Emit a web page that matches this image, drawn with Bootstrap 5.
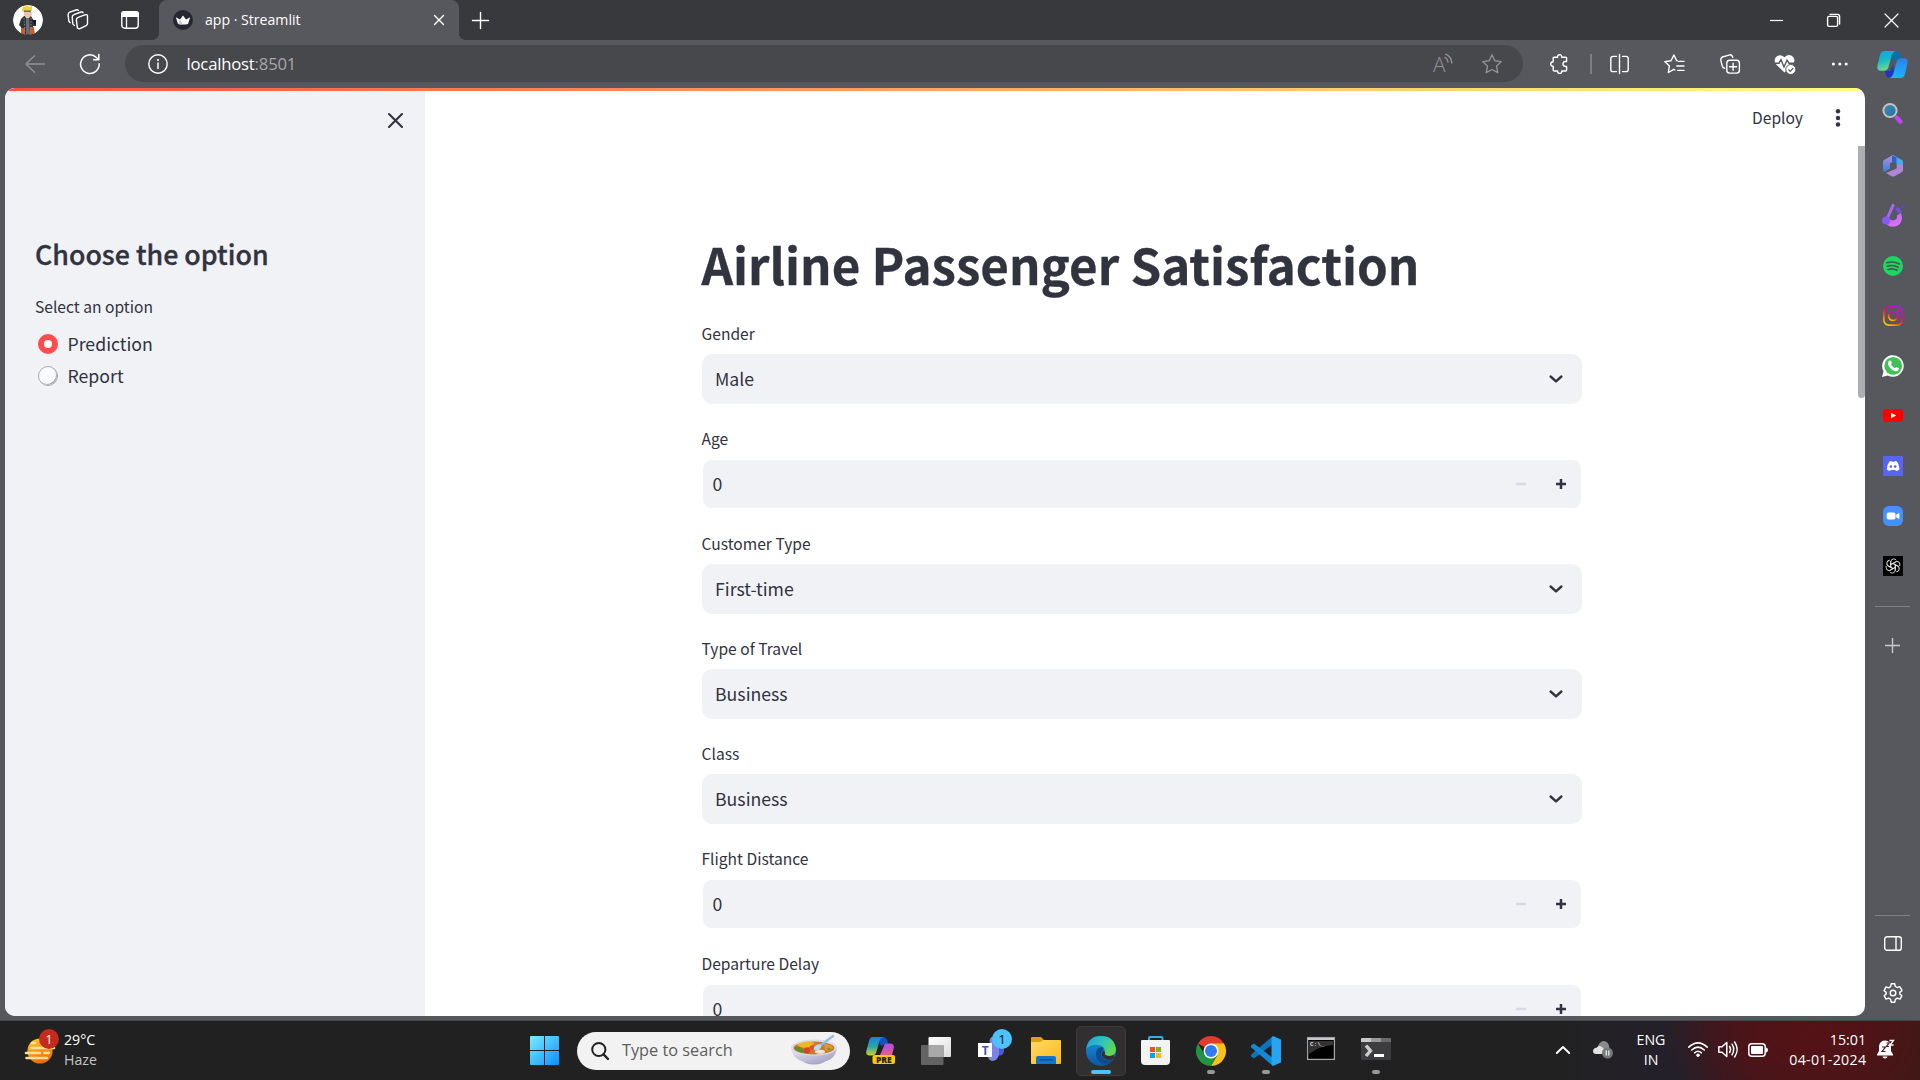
<!DOCTYPE html>
<html lang="en">
<head>
<meta charset="utf-8">
<title>app · Streamlit</title>
<link href="https://cdn.jsdelivr.net/npm/bootstrap@5.3.0/dist/css/bootstrap.min.css" rel="stylesheet">
<style>
  :root { --ui: "Open Sans", "Noto Sans", sans-serif; --st: "Noto Sans CJK SC", "Noto Sans", sans-serif; --ink: #31333f; --field: #f0f2f6; }
  body { width: 1920px; height: 1080px; overflow: hidden; background: #57585d; font-family: var(--ui); color: #fff; }
  svg { display: block; overflow: visible; flex: none; }
  .ln { fill: none; stroke: currentColor; stroke-width: 1.4; stroke-linecap: round; stroke-linejoin: round; }
  .cell { display: flex; align-items: center; justify-content: center; flex: none; }
  .w55 { width: 55px; }
  .w30 { width: 30px; }

  .tabstrip { height: 40px; background: #38393d; }
  .w-avatar { width: 52px; padding-left: 4px; }
  .w-work { width: 52px; }
  .w-acts { width: 55px; padding-right: 4px; }
  .w-newtab { width: 43px; }
  .browser-tab { width: 300px; height: 40px; background: #57585d; border-radius: 8px 8px 0 0; padding: 0 11px 0 14px; position: relative; }
  .browser-tab::before, .browser-tab::after { content: ""; position: absolute; bottom: 0; width: 6px; height: 6px; }
  .browser-tab::before { left: -6px; background: radial-gradient(circle at 0 0, transparent 5.5px, #57585d 6px); }
  .browser-tab::after { right: -6px; background: radial-gradient(circle at 100% 0, transparent 5.5px, #57585d 6px); }
  .tab-title { font-size: 14.1px; margin-left: 12px; line-height: 20px; }
  .win-btn { width: 57.5px; height: 40px; }

  .toolbar { height: 48px; }
  .w-back { width: 70px; }
  .w-reload { width: 40px; margin-right: 15px; }
  .w-ext { width: 67px; padding-left: 6px; }
  .w-copilot { width: 51px; }
  .omnibox { width: 1398px; height: 37px; margin-top: -1px; border-radius: 19px; background: #47484b; padding: 0 21px 0 23px; }
  .omnibox .url { font-size: 16.7px; margin-left: 18.5px; letter-spacing: -.2px; line-height: 24px; }
  .omnibox .port { color: #a6a6a8; }
  .omnibox .fav { margin-left: 29px; }
  .dim { color: #909194; }
  .vline { width: 2px; height: 20px; background: #7d7e82; }

  .viewport-row { height: 932px; }
  .page { width: 1860px; height: 928px; margin-left: 5px; border-radius: 10px; background: #fff; color: var(--ink); font-family: var(--st); overflow: hidden; position: relative; }
  .page-strip { position: absolute; inset: 0 0 auto 0; height: 3px; background: linear-gradient(90deg, #ff4b4b, #fffd80); }
  .st-side { width: 420px; background: var(--field); padding: 25px 22px 0 30px; }
  .st-head { font-size: 26.8px; font-weight: 500; line-height: 36px; margin: 108px 0 20px; white-space: nowrap; -webkit-text-stroke: .35px var(--ink); }
  .st-label { font-size: 15.6px; line-height: 28px; height: 28px; }
  .st-text { font-size: 17.7px; }
  .st-radio { height: 32px; padding-left: 3px; }
  .st-radio span + span { margin-top: -2px; }
  .dot { width: 20px; height: 20px; border-radius: 50%; margin-right: 9.5px; }
  .dot-on { background: #fff; border: 6.5px solid #ff4b4b; }
  .dot-off { background: #f9fafc; border: 1px solid #a9abb2; box-shadow: inset -1px -1px 0 #a9abb2; }
  .st-main { flex: 1; position: relative; }
  .st-top { height: 58px; padding: 2px 15px 0 0; }
  .st-top .st-label { margin-top: -3px; }
  .st-top svg { margin-left: 23px; }
  .st-scroll { width: 880px; margin-left: 277px; }
  .st-title { font-size: 49.3px; font-weight: 700; line-height: 66px; margin: 85px 0 22px -.5px; white-space: nowrap; -webkit-text-stroke: .3px var(--ink); }
  .field-block { height: 105px; }
  .field-block .st-label { margin-left: -.5px; }
  .st-select, .st-number { height: 50px; margin-top: 7px; background: var(--field); border-radius: 10px; }
  .st-select > span, .st-number > span:first-child { margin-top: -2px; }
  .st-select { padding: 0 16px 0 13px; }
  .st-number { border: 1px solid #fff; padding: 0 0 0 9.5px; }
  .step { width: 40px; }
  .page-scroll { position: absolute; right: 0; top: 58px; width: 7px; height: 252px; background: #adaeb3; border-radius: 0 0 4px 4px; }

  .edge-rail { width: 55px; padding: 2.5px 0 0 0; }
  .edge-rail .cell { height: 50px; }
  .rail-line { width: 35px; height: 1px; background: #808185; margin: 0 auto; }

  .taskbar { height: 60px; border-top: 1px solid #46474a; background: radial-gradient(ellipse 150px 110px at 1815px 10px, #561216 0, #4c1417 45%, transparent 100%), linear-gradient(90deg, #212121 0, #212122 1560px, #24202a 1680px, #301a26 1740px, #48171a 1800px, #451818 1850px, #3a1a16 1920px); }
  .weather { width: 517px; padding-left: 25px; }
  .weather svg { margin-top: -8px; }
  .weather .tb-text { margin-left: 5px; }
  .tb-text { font-size: 14.2px; line-height: 20px; margin-top: -2px; }
  .muted { color: #c4c4c4; }
  .date { letter-spacing: .3px; margin-right: -.3px; }
  .tb-search { width: 273px; height: 38px; border-radius: 19px; background: #f2f2f2; margin: 0 3px 0 5px; padding: 0 13px 0 14px; color: #5d5d5d; font-size: 16.3px; }
  .tb-search span { margin-left: 13px; }
  .tile { position: relative; height: 59px; }
  .tile-active { width: 50px; height: 50px; background: #322f31; border: 1px solid #3f3c3d; border-radius: 5px; }
  .pip { position: absolute; bottom: 6px; left: 50%; margin-left: -4px; width: 8px; height: 4px; border-radius: 2px; background: #989898; }
  .pip-on { width: 20px; margin-left: -10px; background: #4cc2ff; }
</style>
<script src="https://cdn.jsdelivr.net/npm/bootstrap@5.3.0/dist/js/bootstrap.bundle.min.js"></script>
</head>
<body>

<!-- Tab strip -->
<header class="tabstrip d-flex align-items-center">
  <div class="cell w-avatar">
    <svg width="30" height="30" viewBox="0 0 30 30"><clipPath id="av"><circle cx="15" cy="15" r="15"/></clipPath><g clip-path="url(#av)"><circle cx="15" cy="15" r="15" fill="#fff"/><path d="M8 14 11 11H18L21 16 23 15 23 21 20 21 20 30H9L8 22 6 20Z" fill="#32333a"/><path d="M8 23h4v7H8zM17 22l4 0 1 8h-5z" fill="#c65f2e"/><path d="M13 12h3l1 17h-4z" fill="#6b6e77"/><path d="M11 13l1 14M18 13v14" stroke="#8d8f98" stroke-width=".8" stroke-dasharray="1.500 1.500"/><path d="M11 4h7l1 6-3 3h-3l-2-3z" fill="#edc7a0"/><path d="M9 5 10 1 12 2 14 0 16 2 19 1 19 6 16 5 10 7Z" fill="#f3d42a"/><path d="M11 5.500h7v1.500h-7z" fill="#606d83"/><path d="M19 15l4 0-1 5z" fill="#15151a"/></g></svg>
  </div>
  <div class="cell w-work"><svg class="ln" width="22" height="22" viewBox="0 0 22 22"><path d="M11.2 8.4 18.5 5.7Q20.5 5.2 20.5 7V14.6Q20.5 16 19.2 16.6L13 19.6Q10.6 20.2 10.2 18L9.4 10.8Q9.3 9.1 11.2 8.4ZM7.3 16.4Q6 16 5.8 14.5L5.2 8.2Q5.2 6.2 6.9 5.6L14 3Q15.8 2.7 16.1 3.7M3.2 13.6Q2 13 1.8 11.7L1.1 6Q1 4 2.8 3.2L9 1Q10.8.5 11.3 1.4"/></svg></div>
  <div class="cell w-acts"><svg width="18" height="18" viewBox="0 0 18 18"><rect x=".8" y=".8" width="16.4" height="16.4" rx="3" fill="none" stroke="#fff" stroke-width="1.4"/><path d="M0 6V3Q0 0 3 0H15Q18 0 18 3V6Z" fill="#fff"/><path d="M5.5 6V17" stroke="#fff" stroke-width="1.3"/></svg></div>
  <div class="browser-tab d-flex align-items-center">
    <svg width="20" height="20" viewBox="0 0 20 20"><circle cx="10" cy="10" r="10" fill="#262730"/><path d="M2.8 7.2 7 9.4 10 5.6 13 9.4 17.2 7.2 15 14Q10 15.2 5 14Z" fill="#fff"/><path d="M7 9.4 10 14.6 5 14Z" fill="#ccc"/></svg>
    <span class="tab-title">app · Streamlit</span>
    <svg class="ln ms-auto me-1" width="10" height="10" viewBox="0 0 10 10"><path d="M.5.5 9.5 9.5M9.5.5.5 9.5"/></svg>
  </div>
  <div class="cell w-newtab"><svg class="ln" width="17" height="17" viewBox="0 0 17 17"><path d="M8.5.5V16.5M.5 8.5H16.5"/></svg></div>
  <div class="d-flex ms-auto">
    <div class="cell win-btn"><svg width="13" height="13" viewBox="0 0 13 13"><path d="M0 6.5H13" stroke="#fff" stroke-width="1.2"/></svg></div>
    <div class="cell win-btn"><svg class="ln" width="13" height="13" viewBox="0 0 13 13"><rect x=".6" y="2.4" width="10" height="10" rx="1.4"/><path d="M3 .4H10.5Q12.6.4 12.6 2.6V10"/></svg></div>
    <div class="cell win-btn"><svg class="ln" width="13" height="13" viewBox="0 0 13 13"><path d="M0 0 13 13M13 0 0 13" stroke-width="1.2"/></svg></div>
  </div>
</header>

<!-- Address toolbar -->
<nav class="toolbar d-flex align-items-center">
  <div class="cell w-back"><svg class="ln dim" width="20" height="18" viewBox="0 0 20 18"><path d="M19.5 9H1M9.5.8 1 9 9.5 17.2"/></svg></div>
  <div class="cell w-reload"><svg class="ln" width="20" height="20" viewBox="0 0 20 20"><path d="M19.2 9.8A9.3 9.3 0 1 1 16.6 3.7L18.6 5.6M18.8.6V5.8H13.6" stroke-width="1.5"/></svg></div>
  <div class="omnibox d-flex align-items-center">
    <svg width="20" height="20" viewBox="0 0 20 20"><circle cx="10" cy="10" r="9.2" fill="none" stroke="#fff" stroke-width="1.4"/><circle cx="10" cy="6" r="1.1" fill="#fff"/><path d="M10 9V14.5" stroke="#fff" stroke-width="1.5" stroke-linecap="round"/></svg>
    <span class="url">localhost<span class="port">:8501</span></span>
    <svg class="dim ms-auto" width="20" height="20" viewBox="0 0 20 20"><text x="0" y="17.5" font-size="20" font-family="Open Sans, sans-serif" font-weight="300" fill="currentColor" textLength="12.5" lengthAdjust="spacingAndGlyphs">A</text><path class="ln" d="M12 3.4Q14.5 4.6 15 8M12.6.2Q18 2 18.8 9" stroke-width="1.3"/></svg>
    <svg class="ln dim fav" width="20" height="20" viewBox="0 0 20 20"><path d="M10 .8 12.8 6.7 19.3 7.6 14.6 12.1 15.8 18.7 10 15.5 4.2 18.7 5.4 12.1.7 7.6 7.2 6.7Z"/></svg>
  </div>
  <div class="cell w-ext"><svg class="ln" width="20" height="20" viewBox="0 0 20 20"><path d="M3.2 4Q3.2 3.2 4 3.2H7.6Q7.2.8 9.6.8T11.7 3.2H15.6Q16.6 3.2 16.6 4.2V7.5H15.4Q13 7.8 13 10T15.4 12.5H16.6V16Q16.6 17 15.6 17H11.7Q12 19.4 9.7 19.4T7.6 17H4.2Q3.2 17 3.2 16V12.3Q.8 12.4.8 10.1T3.2 7.8Z"/></svg></div>
  <div class="vline"></div>
  <div class="cell w55"><svg class="ln" width="19" height="20" viewBox="0 0 19 20"><path d="M9.5.5V19.5M6.5 2.4H3Q.8 2.4.8 4.6V15.4Q.8 17.6 3 17.6H6.5M12.5 2.4H16Q18.2 2.4 18.2 4.6V15.4Q18.2 17.6 16 17.6H12.5"/></svg></div>
  <div class="cell w55"><svg class="ln" width="21" height="20" viewBox="0 0 21 20"><path d="M13.2 6.8 12.7 6.7 9.9 1 7 6.7.8 7.6 5.4 12 4.3 18.5 9.9 15.3 10.8 15.8M14.8 7.4H20M12.8 12H20M13.8 16.4H20"/></svg></div>
  <div class="cell w55"><svg class="ln" width="20" height="20" viewBox="0 0 20 20"><rect x="6.8" y="6.3" width="12.6" height="12.8" rx="2.8"/><path d="M13.1 9.2V16.2M9.6 12.7H16.6M4.7 14.2Q3 14 2.3 12.2L.8 6.3Q.4 4 2.4 3L9.8.8Q12 .6 12.8 3.4"/></svg></div>
  <div class="cell w55"><svg width="22" height="21" viewBox="0 0 22 21"><path d="M10.5 18.5 2 10.3Q-.7 6.6 2 3Q5.9-.8 10.5 3.3Q15-1 19.2 3Q22 6.6 18.6 10.6Z" fill="#fff"/><path d="M0 9.2H5L7 5.6 10 13 13 6.2 15 9.2H21" fill="none" stroke="#57585d" stroke-width="1.4"/><circle cx="16.8" cy="15.5" r="5" fill="#fff" stroke="#57585d"/><path d="M14.5 15.5 16.3 17.3 19.2 14" fill="none" stroke="#57585d" stroke-width="1.2"/></svg></div>
  <div class="cell w55"><svg width="18" height="4" viewBox="0 0 18 4" fill="#fff"><circle cx="2.4" cy="2" r="1.5"/><circle cx="8.8" cy="2" r="1.5"/><circle cx="15.2" cy="2" r="1.5"/></svg></div>
  <div class="cell w-copilot"><svg width="31" height="27" viewBox="0 0 31 27"><defs><linearGradient id="c1" x2=".3" y2="1"><stop stop-color="#11a4e4"/><stop offset=".5" stop-color="#16b9c7"/><stop offset="1" stop-color="#6fdb8e"/></linearGradient><linearGradient id="c2" x2="0" y2="1"><stop stop-color="#2d7ee8"/><stop offset="1" stop-color="#19b6ff"/></linearGradient></defs><path d="M12 0H19Q22 0 23.5 4L24.5 8H20Q17 8 16 12Z" fill="#0c6ea9"/><path d="M8 20H13L16 14 17 20 14 27Q10 27 9 24Z" fill="#1737c9"/><path d="M7.5 0H19Q15.6.6 14.4 5L11.5 16Q10.3 19.8 6.8 19.8H4Q-.5 19.8.4 15L3 4Q4 0 7.5 0Z" fill="url(#c1)"/><path d="M23.5 27H12Q15.4 26.4 16.6 22L19.5 11Q20.7 7.2 24.2 7.2H27Q31.5 7.2 30.6 12L28 23Q27 27 23.5 27Z" fill="url(#c2)"/></svg></div>
</nav>

<div class="viewport-row d-flex">
  <!-- Streamlit app -->
  <div class="page d-flex">
    <aside class="st-side flex-shrink-0">
      <div class="d-flex justify-content-end"><svg class="ln" width="15" height="15" viewBox="0 0 15 15"><path d="M1 1 14 14M14 1 1 14" stroke-width="2.1"/></svg></div>
      <h2 class="st-head">Choose the option</h2>
      <div class="st-label">Select an option</div>
      <div class="st-radio d-flex align-items-center st-text mt-2"><span class="dot dot-on"></span><span>Prediction</span></div>
      <div class="st-radio d-flex align-items-center st-text"><span class="dot dot-off"></span><span>Report</span></div>
    </aside>
    <main class="st-main">
      <div class="st-top d-flex align-items-center justify-content-end">
        <span class="st-label">Deploy</span>
        <svg width="24" height="18" viewBox="0 0 24 18" fill="#31333f"><circle cx="12" cy="2.2" r="2.2"/><circle cx="12" cy="9" r="2.2"/><circle cx="12" cy="15.5" r="2.2"/></svg>
      </div>
      <div class="st-scroll">
        <h1 class="st-title">Airline Passenger Satisfaction</h1>
        <div class="field-block"><div class="st-label">Gender</div><div class="st-select st-text d-flex align-items-center justify-content-between"><span>Male</span><svg class="ln" width="20" height="20" viewBox="0 0 20 20"><path d="M4.6 7.5 10 12.3 15.4 7.5" stroke-width="2.4"/></svg></div></div>
        <div class="field-block"><div class="st-label">Age</div><div class="st-number st-text d-flex align-items-center"><span class="me-auto">0</span><span class="cell step"><svg width="10" height="10" viewBox="0 0 10 10"><path d="M0 5H10" stroke="#d5dae5" stroke-width="2.5"/></svg></span><span class="cell step"><svg width="10" height="10" viewBox="0 0 10 10"><path d="M0 5H10M5 0V10" stroke="#31333f" stroke-width="2.5"/></svg></span></div></div>
        <div class="field-block"><div class="st-label">Customer Type</div><div class="st-select st-text d-flex align-items-center justify-content-between"><span>First-time</span><svg class="ln" width="20" height="20" viewBox="0 0 20 20"><path d="M4.6 7.5 10 12.3 15.4 7.5" stroke-width="2.4"/></svg></div></div>
        <div class="field-block"><div class="st-label">Type of Travel</div><div class="st-select st-text d-flex align-items-center justify-content-between"><span>Business</span><svg class="ln" width="20" height="20" viewBox="0 0 20 20"><path d="M4.6 7.5 10 12.3 15.4 7.5" stroke-width="2.4"/></svg></div></div>
        <div class="field-block"><div class="st-label">Class</div><div class="st-select st-text d-flex align-items-center justify-content-between"><span>Business</span><svg class="ln" width="20" height="20" viewBox="0 0 20 20"><path d="M4.6 7.5 10 12.3 15.4 7.5" stroke-width="2.4"/></svg></div></div>
        <div class="field-block"><div class="st-label">Flight Distance</div><div class="st-number st-text d-flex align-items-center"><span class="me-auto">0</span><span class="cell step"><svg width="10" height="10" viewBox="0 0 10 10"><path d="M0 5H10" stroke="#d5dae5" stroke-width="2.5"/></svg></span><span class="cell step"><svg width="10" height="10" viewBox="0 0 10 10"><path d="M0 5H10M5 0V10" stroke="#31333f" stroke-width="2.5"/></svg></span></div></div>
        <div class="field-block"><div class="st-label">Departure Delay</div><div class="st-number st-text d-flex align-items-center"><span class="me-auto">0</span><span class="cell step"><svg width="10" height="10" viewBox="0 0 10 10"><path d="M0 5H10" stroke="#d5dae5" stroke-width="2.5"/></svg></span><span class="cell step"><svg width="10" height="10" viewBox="0 0 10 10"><path d="M0 5H10M5 0V10" stroke="#31333f" stroke-width="2.5"/></svg></span></div></div>
      </div>
      <div class="page-scroll"></div>
    </main>
    <div class="page-strip"></div>
  </div>

  <!-- Edge side rail -->
  <aside class="edge-rail d-flex flex-column">
    <div class="cell pb-1"><svg width="21" height="21" viewBox="0 0 21 21"><defs><linearGradient id="s1" x2="1" y2="1"><stop stop-color="#3d8cb5"/><stop offset="1" stop-color="#2272a4"/></linearGradient></defs><path d="M14.5 14.5 18.5 18.8" stroke="#c245f5" stroke-width="4.2" stroke-linecap="round"/><circle cx="8" cy="7.5" r="6.6" fill="url(#s1)" stroke="#c3c2bf" stroke-width="2"/></svg></div>
    <div class="cell"><svg width="20" height="22" viewBox="0 0 20 22"><defs><linearGradient id="m1" y1="0" x2="0" y2="1"><stop stop-color="#b08fe0"/><stop offset="1" stop-color="#3b7fd5"/></linearGradient></defs><path d="M10 0 19 5Q20 5.6 20 7V13L13.5 9.5 12 4.500 8 1Z" fill="#48a8ec"/><path d="M9 .5 1 5Q0 5.600 0 7V15Q.2 16.600 1.500 17L7 13.500V8.500L13.500 5V2.500Z" fill="url(#m1)"/><path d="M9 .5 13.500 2.500V9L9 6.800Z" fill="#2b62c4"/><path d="M20 10V15Q20 16.500 19 17L11.5 21.2Q10 22 8.5 21.2L3 18 13.5 13.5V9.2Z" fill="#ad87d6"/><path d="M7 9 10 7.3 13.5 9.3V13L10 15 7 13Z" fill="#57585d"/></svg></div>
    <div class="cell"><svg width="22" height="24" viewBox="0 0 22 24"><defs><linearGradient id="d1" x2="1" y2="1"><stop stop-color="#b15cf1"/><stop offset="1" stop-color="#e27af8"/></linearGradient></defs><path d="M2 16Q5 23.5 12 22.8Q19.5 21.5 20 14Q20 11 18.5 9L15 11.5Q15.5 15.5 11.5 16.5Q8.5 16.5 7 14Z" fill="url(#d1)"/><path d="M11 1.3 5.5 14" stroke="#a46af0" stroke-width="3" stroke-linecap="round"/><circle cx="4" cy="16.6" r="4" fill="#8957f4"/><path d="M13 5 16 3 20 7.5 17 9.5Z" fill="#7a4cec"/><path d="M18 3.5 21.5.5 22 4Z" fill="#6246cf"/></svg></div>
    <div class="cell"><svg width="20" height="20" viewBox="0 0 20 20"><circle cx="10" cy="10" r="10" fill="#1ed760"/><path d="M3.8 6.8Q10.5 4.8 16.4 8M4.4 10.2Q10 8.5 15.2 11.3M5 13.4Q10 12 14 14.3" fill="none" stroke="#4a554f" stroke-width="1.6" stroke-linecap="round"/></svg></div>
    <div class="cell"><svg width="20" height="20" viewBox="0 0 20 20"><defs><linearGradient id="ig" x1=".2" y1="1" x2=".8" y2="0"><stop stop-color="#ffc400"/><stop offset=".35" stop-color="#ff4a1c"/><stop offset=".6" stop-color="#f5007c"/><stop offset="1" stop-color="#a818f0"/></linearGradient></defs><g fill="none" stroke="url(#ig)" stroke-width="1.8"><rect x=".9" y=".9" width="18.2" height="18.2" rx="5"/><circle cx="10" cy="10" r="4.3"/></g><circle cx="15.3" cy="4.6" r="1.2" fill="#e30fa8"/></svg></div>
    <div class="cell"><svg width="22" height="22" viewBox="0 0 22 22"><path d="M0 22 1.5 16.3A10.8 10.8 0 1 1 5.8 20.5Z" fill="#fff"/><circle cx="11.2" cy="10.9" r="8.9" fill="#3dc253"/><path d="M7.2 5.8Q8.6 4.8 9.2 6.3L9.8 7.8Q10 8.7 9 9.5Q10.4 12 13 13.2L14.2 11.9Q16.2 12.4 17 13.4Q16.6 16.3 13.8 16.2Q8.3 15 6 9.4Q5.6 7 7.2 5.8Z" fill="#fff"/></svg></div>
    <div class="cell"><svg width="20" height="13" viewBox="0 0 20 13"><rect width="20" height="13" rx="3" fill="#f00"/><path d="M8 3.700 13.2 6.500 8 9.300Z" fill="#fff"/></svg></div>
    <div class="cell"><svg width="20" height="20" viewBox="0 0 20 20"><rect width="20" height="20" fill="#5865f2"/><path d="M6.5 5.6 8.3 5 8.8 5.8H11.4L12 5 13.8 5.6Q16 8 16.4 13.4Q14.8 14.8 13.2 15L12.4 13.9H7.8L7 15Q5.3 14.8 3.8 13.4Q4 8.6 6.5 5.6Z" fill="#fff"/><circle cx="7.9" cy="10.6" r="1.3" fill="#5865f2"/><circle cx="12.2" cy="10.6" r="1.3" fill="#5865f2"/></svg></div>
    <div class="cell"><svg width="20" height="20" viewBox="0 0 20 20"><rect width="20" height="20" rx="6" fill="#4591fb"/><rect x="3.7" y="6.5" width="8.8" height="7" rx="1.8" fill="#fff"/><path d="M13.2 8.7 16.4 6.7V13.3L13.2 11.3Z" fill="#fff"/></svg></div>
    <div class="cell"><svg width="20" height="20" viewBox="0 0 20 20"><rect width="20" height="20" fill="#000"/><g fill="none" stroke="#e8e8e8" stroke-width=".9"><path id="lobe" d="M7.700 11.300V5.600Q8.200 3 10.700 2.900Q12.400 3 13.300 4.200M8 8.500 13 5.700"/><use href="#lobe" transform="rotate(60 10 10)"/><use href="#lobe" transform="rotate(120 10 10)"/><use href="#lobe" transform="rotate(180 10 10)"/><use href="#lobe" transform="rotate(240 10 10)"/><use href="#lobe" transform="rotate(300 10 10)"/></g></svg></div>
    <div class="rail-line" style="margin-top:15px"></div>
    <div class="cell mt-3 pb-1"><svg width="15" height="15" viewBox="0 0 15 15"><path d="M7.5 0V15M0 7.5H15" stroke="#c9c9cb" stroke-width="1.4"/></svg></div>
    <div class="rail-line mt-auto"></div>
    <div class="cell mt-1 pb-1"><svg class="ln" width="18" height="15" viewBox="0 0 18 15"><rect x=".7" y=".7" width="16.6" height="13.6" rx="2.4"/><path d="M12 1V14"/></svg></div>
    <div class="cell pb-1"><svg class="ln" width="20" height="20" viewBox="0 0 20 20"><circle cx="10" cy="10" r="2.8"/><path d="M8.2.8H11.8L12.3 3.5 14.1 4.5 16.6 3.6 18.6 6.5 18.9 7.6 16.8 9.4V10.9L18.9 12.7 17 16.1 14.3 15.2 12.4 16.4 11.8 19.2H8.2L7.6 16.4 5.7 15.2 3 16.1 1.1 12.7 3.2 10.9V9.4L1.1 7.6 3 3.9 5.8 4.8 7.6 3.6Z"/></svg></div>
  </aside>
</div>

<!-- Windows taskbar -->
<footer class="taskbar d-flex align-items-center">
  <div class="weather d-flex align-items-center">
    <svg width="34" height="36" viewBox="0 0 34 36"><defs><linearGradient id="sun" x2=".3" y2="1"><stop stop-color="#ffcf1f"/><stop offset="1" stop-color="#ee6d0b"/></linearGradient></defs><circle cx="15" cy="22" r="12.6" fill="url(#sun)"/><path d="M7 14H10M6.500 19H29M1 24H15M19.500 24H24M1.500 29H22" stroke="#f7dfa0" stroke-width="2.6" stroke-linecap="round"/><circle cx="24" cy="10" r="10" fill="#c42b1c"/><text x="24" y="14.700" font-family="Open Sans, sans-serif" font-size="13" fill="#fff" text-anchor="middle">1</text></svg>
    <div class="tb-text"><div>29°C</div><div class="muted">Haze</div></div>
  </div>
  <div class="cell w55"><svg width="29" height="29" viewBox="0 0 29 29"><defs><linearGradient id="wn" x2="1" y2="1"><stop stop-color="#7cecff"/><stop offset="1" stop-color="#0b8fff"/></linearGradient></defs><path d="M1 0H14V14H0V1Q0 0 1 0ZM15 0H28Q29 0 29 1V14H15ZM0 15H14V29H1Q0 29 0 28ZM15 15H29V28Q29 29 28 29H15Z" fill="url(#wn)"/></svg></div>
  <div class="tb-search d-flex align-items-center">
    <svg width="18" height="18" viewBox="0 0 18 18"><circle cx="7.800" cy="7.500" r="6.600" fill="none" stroke="#222" stroke-width="2"/><path d="M12.500 12.300 17 17" stroke="#222" stroke-width="2.400" stroke-linecap="round"/></svg>
    <span>Type to search</span>
    <svg class="ms-auto" width="46" height="29" viewBox="0 0 46 29"><defs><linearGradient id="bw" x2="1" y2="1"><stop stop-color="#eceaf4"/><stop offset="1" stop-color="#9d9ac0"/></linearGradient></defs><ellipse cx="23" cy="24.500" rx="11" ry="4" fill="#a7a4c4"/><path d="M0 11Q1 27 23 27Q45 27 46 11Z" fill="url(#bw)"/><ellipse cx="23" cy="11.500" rx="23" ry="8" fill="#dedbea"/><ellipse cx="23" cy="12" rx="20.500" ry="6.500" fill="#c87a32"/><path d="M6 9Q14 3 24 7L18 11Q10 13 6 9Z" fill="#f2b81f"/><path d="M3 12Q6 9 11 12L14 17Q7 17 3 12Z" fill="#5e8f2d"/><circle cx="16" cy="14.500" r="3" fill="#d8402a"/><circle cx="21" cy="11.500" r="2" fill="#df4a34"/><ellipse cx="29" cy="15.800" rx="5" ry="2" fill="#f4e4cf"/><path d="M33 8Q41 8 42 12Q38 17 34 14Z" fill="#d9982c"/><circle cx="38" cy="13" r="1.600" fill="#6b982f"/><path d="M26 12 42 0" stroke="#8fbde8" stroke-width="2.200" stroke-linecap="round"/><ellipse cx="26.500" cy="11.500" rx="4" ry="2.600" fill="#b9d8f3" transform="rotate(-35 26.500 11.500)"/></svg>
  </div>
  <div class="cell w55 tile"><svg width="30" height="28" viewBox="0 0 30 28"><defs><linearGradient id="p1" x2="0" y2="1"><stop stop-color="#1f7fe0"/><stop offset=".5" stop-color="#22a6a6"/><stop offset="1" stop-color="#d5ce35"/></linearGradient><linearGradient id="p2" x2="0" y2="1"><stop stop-color="#a94ee8"/><stop offset="1" stop-color="#f2646e"/></linearGradient></defs><path d="M12 0H18Q21 1 22 6L15 9Z" fill="#1550c8"/><path d="M7 0H17Q14.500 1 13.500 4L10 16Q9 18.500 6 18.500H3Q-.5 18 .3 14L3 4Q4 0 7 0Z" fill="url(#p1)"/><path d="M19 6.500H25Q28.500 7 27.800 11L25.500 20H12Q14 19 15 16Z" fill="url(#p2)"/><rect x="6.500" y="18" width="22.500" height="9" rx="2" fill="#ffc800"/><text x="17.800" y="25.600" font-family="Open Sans, sans-serif" font-size="8.500" font-weight="800" text-anchor="middle" fill="#222">PRE</text></svg></div>
  <div class="cell w55 tile"><svg width="30" height="28" viewBox="0 0 30 28"><defs><linearGradient id="tv" x2="1" y2="1"><stop stop-color="#fff"/><stop offset="1" stop-color="#ddd"/></linearGradient></defs><rect x="7.500" width="22.500" height="20" rx="1" fill="url(#tv)"/><rect y="8" width="22.500" height="20" rx="1" fill="#636363"/><rect x="7.500" y="8" width="15" height="12" fill="#a8a8a8"/></svg></div>
  <div class="cell w55 tile pb-2 ps-2"><svg class="mb-1" width="34" height="34" viewBox="0 0 34 34"><circle cx="16" cy="13" r="4.500" fill="#7b83eb"/><path d="M19 15H26V24Q24 29 19 27Z" fill="#5059c9"/><path d="M10 15H21V26Q20 33 14 33Q10 32 10 28Z" fill="#7b83eb"/><rect y="15" width="14" height="14" fill="#fff"/><text x="7.200" y="26.500" font-family="Open Sans, sans-serif" font-size="12" font-weight="700" fill="#4b53bc" text-anchor="middle">T</text><circle cx="24" cy="11" r="10" fill="#4cc2ff"/><text x="24" y="15.800" font-family="Open Sans, sans-serif" font-size="13.500" fill="#111" text-anchor="middle">1</text></svg></div>
  <div class="cell w55 tile"><svg width="30" height="27" viewBox="0 0 30 27"><defs><linearGradient id="fo" x2="1" y2="1"><stop stop-color="#ffdb66"/><stop offset="1" stop-color="#fbb81a"/></linearGradient></defs><path d="M0 1Q0 0 1 0H10L13 3V8H0Z" fill="#dfa00a"/><path d="M0 5H9L12.500 3H29Q30 3 30 4V26Q30 27 29 27H1Q0 27 0 26Z" fill="url(#fo)"/><path d="M5 27V21Q5 19 7 19H23Q25 19 25 21V27Z" fill="#1275c9"/><path d="M8.500 22.800H21.500" stroke="#0b4f92" stroke-width="1.500"/></svg></div>
  <div class="cell w55 tile"><div class="cell tile-active"><svg width="30" height="30" viewBox="0 0 30 30"><defs><linearGradient id="e1" x2="1" y2=".5"><stop stop-color="#1b9de2"/><stop offset=".6" stop-color="#35c5b8"/><stop offset="1" stop-color="#63d84c"/></linearGradient><linearGradient id="e2" x2="0" y2="1"><stop stop-color="#1a93e0"/><stop offset="1" stop-color="#0c59a4"/></linearGradient></defs><circle cx="15" cy="15" r="15" fill="url(#e2)"/><path d="M.2 13Q2 0 15 0Q28 0 30 13Q30 19.500 23.500 20Q18 19.800 19 17Q19.500 11 14 9.200Q5 7.500.2 13Z" fill="url(#e1)"/><path d="M10 18Q10 26 18 28Q23 29 28 23Q21 26.500 16.500 22Q13.500 18 16.500 15Q18 13 17 11Q10 11 10 18Z" fill="#134a8e"/><path d="M19 17Q18 20 23.500 20Q26 20 27.500 19L29 22Q22 26 17 21.500Q14 17 18 14.500Z" fill="#322f31"/></svg></div><span class="pip pip-on"></span></div>
  <div class="cell w55 tile"><svg width="29" height="29" viewBox="0 0 29 29"><path d="M8 6V2Q8 1 9 1H20.500Q21.500 1 21.500 2V6" fill="none" stroke="#29b1e8" stroke-width="2"/><path d="M0 5Q0 4 1 4H28Q29 4 29 5V25Q29 29 25 29H4Q0 29 0 25Z" fill="#f3f3f3"/><path d="M9 11H14V16H9Z" fill="#f25022"/><path d="M15 11H20V16H15Z" fill="#7fba00"/><path d="M9 17H14V22H9Z" fill="#00a4ef"/><path d="M15 17H20V22H15Z" fill="#ffb900"/></svg></div>
  <div class="cell w55 tile"><svg width="30" height="30" viewBox="0 0 30 30"><path d="M15 15 2 7.500A15 15 0 0 1 28 7.500Z" fill="#e33b2e"/><path d="M15 7.500H28A15 15 0 0 1 15 30L21.500 18.800Z" fill="#fbc116"/><path d="M2 7.500A15 15 0 0 0 15 30L21.500 18.800 8.500 18.800Z" fill="#229342"/><circle cx="15" cy="15" r="7.500" fill="#fff"/><circle cx="15" cy="15" r="6" fill="#2f7bf0"/></svg><span class="pip"></span></div>
  <div class="cell w55 tile"><svg width="30" height="30" viewBox="0 0 30 30"><path d="M22 0 22 8 3 22.500 0 20.500V18.800Z" fill="#0b74bd"/><path d="M22 30 22 22 3 7.500 0 9.500V11.200Z" fill="#1489d1"/><path d="M22 0 30 3.500V26.500L22 30 20.500 28V2Z" fill="#27a5f2"/></svg><span class="pip"></span></div>
  <div class="cell w55 tile pb-1"><svg width="28" height="23" viewBox="0 0 28 23"><rect x=".6" y=".6" width="26.800" height="21.800" fill="#000" stroke="#a4a4a4" stroke-width="1.300"/><path d="M1 1H27V3H1Z" fill="#c8c8cc"/><path d="M2 4H26V8Q12 9 2 17Z" fill="#333"/><text x="3" y="9" font-family="Liberation Mono, monospace" font-weight="700" font-size="6" fill="#ddd">C:\_</text></svg></div>
  <div class="cell w55 tile pb-1"><svg width="30" height="22" viewBox="0 0 30 22"><rect width="30" height="22" rx="1" fill="#3d3d3f"/><path d="M0 4V1Q0 0 1 0H10V4Z" fill="#c8c8c8"/><path d="M10 0H20V4H10Z" fill="#999"/><path d="M20 0H29Q30 0 30 1V4H20Z" fill="#6b6b6b"/><path d="M5 7.500 9.500 12.800 5 18" fill="none" stroke="#ccc" stroke-width="3.400"/><path d="M13 17.500H23" stroke="#fff" stroke-width="3"/></svg><span class="pip"></span></div>

  <div class="d-flex align-items-center ms-auto tb-text pe-3 me-1">
    <div class="cell w30"><svg class="ln" width="14" height="8" viewBox="0 0 14 8"><path d="M.8 7 7 1 13.200 7" stroke-width="1.900"/></svg></div>
    <div class="cell" style="width:50px"><svg width="20" height="18" viewBox="0 0 20 18"><path d="M4 8Q6 0 11 0Q16 1 16.500 7L10 10Z" fill="#8b8b8d"/><path d="M3 13Q0 13 0 10T4 6.500Q7 3 11 8L15 13Z" fill="#e2e2e2"/><circle cx="14.500" cy="12" r="5.500" fill="#77787a"/><path d="M13.200 9.500V14.500M15.800 9.500V14.500" stroke="#fff" stroke-width="1.100"/></svg></div>
    <div class="text-center" style="width:46px"><div>ENG</div><div>IN</div></div>
    <div class="cell w30" style="margin-left:9px"><svg class="ln" width="20" height="15" viewBox="0 0 20 15"><path d="M.8 5.200Q10-3.600 19.200 5.200M3.700 8Q10 2.200 16.300 8M6.600 10.800Q10 7.700 13.400 10.800" stroke-width="1.600"/><circle cx="10" cy="13.200" r="1.300" fill="#fff" stroke-width="1"/></svg></div>
    <div class="cell w30"><svg class="ln" width="20" height="17" viewBox="0 0 20 17"><path d="M.8 5.800H4L8.800 1.500V15.500L4 11.200H.8ZM11.600 5.500Q13.500 8.500 11.600 11.500M14 3.200Q17.500 8.500 14 13.800M16.600 1Q21.800 8.500 16.600 16" stroke-width="1.500"/></svg></div>
    <div class="cell w30"><svg width="20" height="14" viewBox="0 0 20 14"><rect x=".8" y=".8" width="16.400" height="12.400" rx="3" fill="none" stroke="#fff" stroke-width="1.500"/><rect x="3" y="3" width="12" height="8" rx="1" fill="#fff"/><path d="M18 4.500Q20 4.800 20 7T18 9.500Z" fill="#fff"/></svg></div>
    <div class="text-end" style="width:93px"><div>15:01</div><div class="date">04-01-2024</div></div>
    <div class="cell w30 ms-1"><svg width="17" height="19" viewBox="0 0 17 19"><path d="M2 6Q3 .5 8 .5Q14 1 14 7V11L16 14.500V15.500H0V14.500L2 11Z" fill="#fff"/><path d="M5.500 16.500H10.500Q10 18.600 8 18.600T5.500 16.500Z" fill="#fff"/><path d="M5 7H8.500L5 11.500H8.500M9.500 3H12L9.500 6.500H12" fill="none" stroke="#451818" stroke-width="1.200"/><path d="M12.500.5H16.500L13 5H16.500" fill="none" stroke="#fff" stroke-width="1.300"/></svg></div>
  </div>
</footer>
</body>
</html>
